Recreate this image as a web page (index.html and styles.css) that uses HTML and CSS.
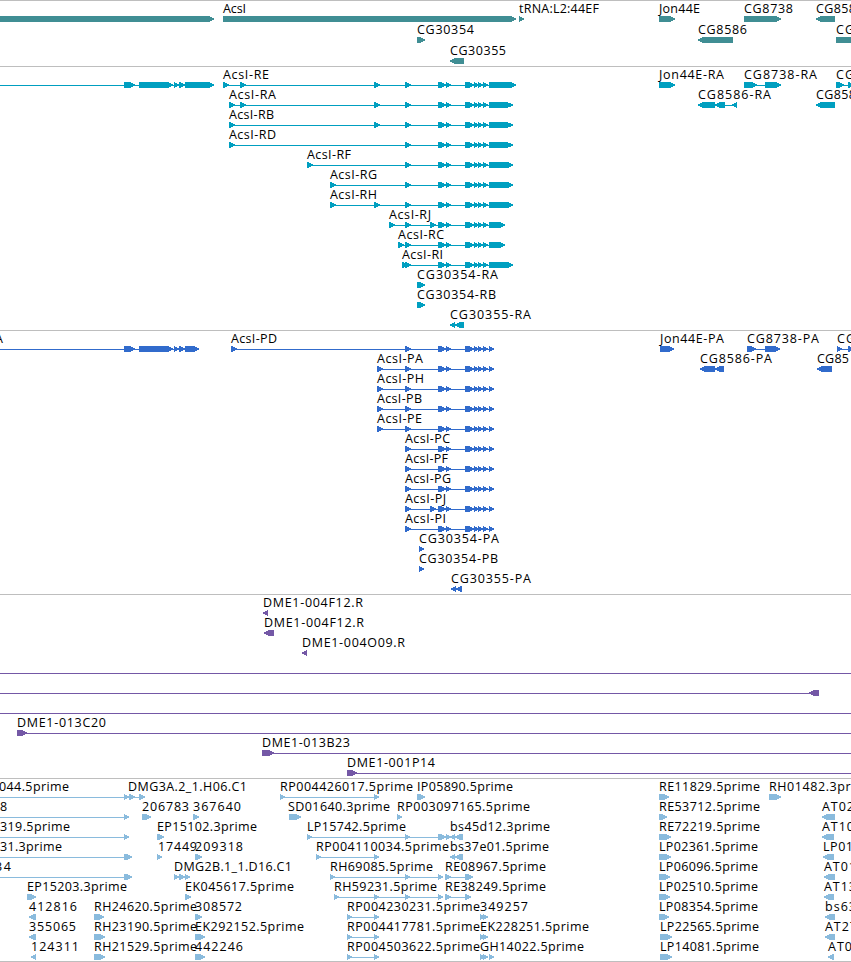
FILE: index.html
```html
<!DOCTYPE html>
<html lang="en">
<head>
    <meta charset="UTF-8">
    <meta name="viewport" content="width=device-width, initial-scale=1.0">
    <title>Genome tracks</title>
    <link rel="stylesheet" href="styles.css">
</head>
<body>
    <main id="browser"></main>
    <script src="tracks.js"></script>
</body>
</html>
```
FILE: styles.css
```css
:root {
    --gene: #408e94;
    --transcript: #009fc0;
    --protein: #316bcc;
    --clone: #7458a6;
    --est: #8abbdd;
}
body {
    margin: 0;
    background-color: white;
    overflow: hidden;
}
#browser {
    width: 100%;
    border-bottom: 1px solid #bebebe;
}
.track {
    box-sizing: border-box;
    border-top: 1px solid #bebebe;
    overflow: hidden;
}
.gene {
    height: 66px;
    fill: var(--gene);
}
.transcript {
    height: 264px;
    fill: var(--transcript);
}
.protein {
    height: 264px;
    fill: var(--protein);
}
.clone {
    height: 184px;
    fill: var(--clone);
}
.est {
    height: 183px;
    fill: var(--est);
}
.row {
    display: block;
    width: 100%;
    height: 20px;
    overflow: visible;
}
.gene .row {
    height: 21px;
}
.shape {
    shape-rendering: crispEdges;
}
.label {
    font-family: "Open Sans", "DejaVu Sans", sans-serif;
    font-size: 12.5px;
    fill: black;
}
```
FILE: tracks.js
```js
// label: [text, start, end]
// line:  [start, end]
// box:   [start, end], a third value of -1 points it left
const tail = [[438, 446], [446, 451], [465, 474], [474, 479], [478, 483], [483, 488]];

function transcript(name, labelEnd, starts, end) {
    const boxes = starts.map(x => [x, x + 5.5]).concat(tail, [[489, end]]);
    return { labels: [[name, starts[0], labelEnd]], lines: [[starts[0], end]], boxes: boxes };
}

function protein(name, labelEnd, starts) {
    return transcript(name, labelEnd, starts, 494);
}

function merge(...parts) {
    return {
        labels: parts.flatMap(p => p.labels || []),
        lines: parts.flatMap(p => p.lines || []),
        boxes: parts.flatMap(p => p.boxes || [])
    };
}

const tracks = [
    { type: 'gene', rows: [
        {
            labels: [['AcsI', 223, 246], ['tRNA:L2:44EF', 519, 599], ['Jon44E', 659, 700], ['CG8738', 744, 793], ['CG858', 816, 856]],
            boxes: [[-10, 214], [223, 516], [519, 524], [659, 675], [744, 781], [816, 835, -1]]
        },
        {
            labels: [['CG30354', 417, 474], ['CG8586', 698, 747], ['CG', 836, 854]],
            boxes: [[417, 425], [698, 733, -1], [836, 870]]
        },
        { labels: [['CG30355', 450, 506]], boxes: [[450, 464, -1]] }
    ] },
    { type: 'transcript', rows: [
        merge(transcript('AcsI-RE', 269, [223, 240, 374, 405], 516), {
            labels: [['Jon44E-RA', 659, 724], ['CG8738-RA', 744, 817], ['CG', 836, 854]],
            lines: [[0, 214], [744, 781], [836, 851]],
            boxes: [[124, 135], [139, 173], [174, 179], [179, 185], [185, 214], [659, 675], [744, 757], [765, 781], [836, 844], [848, 854]]
        }),
        merge(transcript('AcsI-RA', 276, [229, 240, 374, 405], 512.5), {
            labels: [['CG8586-RA', 698, 771], ['CG858', 816, 856]],
            lines: [[700, 737]],
            boxes: [[698, 715, -1], [715, 725, -1], [732, 737, -1], [816, 835, -1]]
        }),
        transcript('AcsI-RB', 274, [229, 374, 405], 512.5),
        transcript('AcsI-RD', 276, [229, 405], 512.5),
        transcript('AcsI-RF', 351, [307, 405], 513),
        transcript('AcsI-RG', 377, [330, 405], 513),
        transcript('AcsI-RH', 377, [330, 374, 405], 513),
        transcript('AcsI-RJ', 431, [389, 405, 430], 505),
        transcript('AcsI-RC', 444, [398, 405], 505),
        transcript('AcsI-RI', 443, [402, 405], 513),
        { labels: [['CG30354-RA', 417, 498]], boxes: [[417, 425]] },
        { labels: [['CG30354-RB', 417, 496]], boxes: [[417, 425]] },
        { labels: [['CG30355-RA', 450, 531]], boxes: [[450, 455, -1], [455, 464, -1]] }
    ] },
    { type: 'protein', rows: [
        merge(protein('AcsI-PD', 277, [231, 405]), {
            labels: [['A', -5, 3], ['Jon44E-PA', 660, 724], ['CG8738-PA', 747, 819], ['CG', 837, 855]],
            lines: [[0, 199], [747, 780], [837, 851]],
            boxes: [[124, 135], [139, 173], [174, 179], [179, 185], [185, 199], [660, 674], [747, 756], [765, 780], [837, 842], [848, 854]]
        }),
        merge(protein('AcsI-PA', 423, [377, 405]), {
            labels: [['CG8586-PA', 700, 772], ['CG85', 817, 849]],
            lines: [[702, 724]],
            boxes: [[700, 715, -1], [715, 724, -1], [817, 832, -1]]
        }),
        protein('AcsI-PH', 424, [377, 405]),
        protein('AcsI-PB', 422, [377, 405]),
        protein('AcsI-PE', 422, [377, 405]),
        protein('AcsI-PC', 450, [405]),
        protein('AcsI-PF', 448, [405]),
        protein('AcsI-PG', 451, [405]),
        protein('AcsI-PJ', 446, [405, 430]),
        protein('AcsI-PI', 446, [405]),
        { labels: [['CG30354-PA', 419, 499]], boxes: [[419, 424]] },
        { labels: [['CG30354-PB', 419, 498]], boxes: [[419, 424]] },
        { labels: [['CG30355-PA', 451, 531]], boxes: [[451, 456, -1], [456, 462, -1]] }
    ] },
    { type: 'clone', rows: [
        { labels: [['DME1-004F12.R', 263, 363]], boxes: [[263, 268, -1]] },
        { labels: [['DME1-004F12.R', 264, 364]], boxes: [[264, 274, -1]] },
        { labels: [['DME1-004O09.R', 302, 405]], boxes: [[302, 307, -1]] },
        { lines: [[0, 851]] },
        { lines: [[0, 819]], boxes: [[809, 819, -1]] },
        { lines: [[0, 851]] },
        { labels: [['DME1-013C20', 17, 106]], lines: [[17, 851]], boxes: [[17, 27]] },
        { labels: [['DME1-013B23', 262, 350]], lines: [[262, 851]], boxes: [[262, 274]] },
        { labels: [['DME1-001P14', 347, 435]], lines: [[347, 851]], boxes: [[347, 357]] }
    ] },
    { type: 'est', rows: [
        {
            labels: [['044.5prime', -1, 69], ['DMG3A.2_1.H06.C1', 128, 247], ['RP004426017.5prime', 280, 413], ['IP05890.5prime', 417, 513], ['RE11829.5prime', 659, 760], ['RH01482.3prime', 769, 874]],
            lines: [[0, 144], [280, 379]],
            boxes: [[124, 129], [129, 135], [139, 145], [280, 285], [374, 379], [417, 425], [659, 669], [769, 781]]
        },
        {
            labels: [['8', 0, 8], ['206783', 142, 189], ['367640', 193, 241], ['SD01640.3prime', 288, 390], ['RP003097165.5prime', 397, 530], ['RE53712.5prime', 659, 760], ['AT02', 822, 854]],
            lines: [[0, 129]],
            boxes: [[124, 129], [142, 151], [193, 199], [289, 301], [397, 402], [659, 667], [822, 835, -1]]
        },
        {
            labels: [['319.5prime', 0, 70], ['EP15102.3prime', 157, 257], ['LP15742.5prime', 307, 406], ['bs45d12.3prime', 450, 550], ['RE72219.5prime', 659, 760], ['AT10', 822, 854]],
            lines: [[0, 129], [307, 463]],
            boxes: [[124, 129], [157, 164], [307, 312], [405, 410], [438, 446], [446, 451], [450, 455, -1], [455, 463, -1], [659, 671], [822, 834, -1]]
        },
        {
            labels: [['31.3prime', 0, 62], ['17449', 158, 197], ['209318', 195, 243], ['RP004110034.5prime', 316, 449], ['bs37e01.5prime', 450, 549], ['LP02361.5prime', 659, 758], ['LP01', 823, 853]],
            lines: [[0, 132], [316, 379]],
            boxes: [[124, 132], [157, 162], [195, 202], [316, 321], [374, 379], [450, 455, -1], [455, 463, -1], [659, 671], [823, 834, -1]]
        },
        {
            labels: [['34', -5, 11], ['DMG2B.1_1.D16.C1', 174, 292], ['RH69085.5prime', 330, 433], ['RE08967.5prime', 445, 546], ['LP06096.5prime', 659, 758], ['AT01', 824, 856]],
            lines: [[0, 132], [330, 443], [445, 473]],
            boxes: [[124, 132], [174, 179], [179, 185], [185, 190], [330, 335], [405, 410], [438, 443], [445, 451], [465, 473], [659, 670], [824, 835, -1]]
        },
        {
            labels: [['EP15203.3prime', 27, 127], ['EK045617.5prime', 185, 294], ['RH59231.5prime', 334, 437], ['RE38249.5prime', 445, 546], ['LP02510.5prime', 659, 758], ['AT13', 824, 856]],
            lines: [[334, 443], [445, 471]],
            boxes: [[27, 36], [185, 191], [334, 339], [374, 379], [405, 410], [438, 443], [445, 451], [465, 471], [659, 670], [824, 834, -1]]
        },
        {
            labels: [['412816', 29, 77], ['RH24620.5prime', 94, 197], ['308572', 195, 242], ['RP004230231.5prime', 347, 480], ['349257', 480, 528], ['LP08354.5prime', 659, 758], ['bs63', 825, 856]],
            lines: [[347, 379]],
            boxes: [[29, 36, -1], [94, 104], [195, 202], [347, 352], [374, 379], [480, 485], [483, 488], [659, 669], [825, 835, -1]]
        },
        {
            labels: [['355065', 29, 76], ['RH23190.5prime', 94, 197], ['EK292152.5prime', 195, 304], ['RP004417781.5prime', 347, 480], ['EK228251.5prime', 480, 589], ['LP22565.5prime', 660, 759], ['AT27', 825, 857]],
            lines: [[347, 379]],
            boxes: [[29, 36, -1], [94, 105], [195, 205], [347, 352], [374, 379], [480, 485], [483, 488], [660, 672], [825, 835, -1]]
        },
        {
            labels: [['124311', 31, 79], ['RH21529.5prime', 94, 197], ['442246', 195, 243], ['RP004503622.5prime', 347, 480], ['GH14022.5prime', 480, 584], ['LP14081.5prime', 660, 759], ['AT0', 828, 852]],
            lines: [[347, 379]],
            boxes: [[31, 36, -1], [94, 105], [195, 205], [347, 352], [374, 379], [480, 485], [483, 488], [489, 494], [660, 672], [828, 834, -1]]
        }
    ] }
];

// Row geometry: the shapes sit at y 15-21, the intron line at y 18
function drawBox([start, end, dir]) {
    const head = Math.min(6, end - start);
    const side = dir === -1 ? -1 : 1;
    const back = dir === -1 ? end : start;
    const tip = dir === -1 ? start : end;
    const neck = tip - side * (head - 0.6);
    const cheek = tip - side * 2;
    return `<polygon class="shape" points="${back},15 ${neck},15 ${cheek},16.4 ${tip},17.4 ${tip},18.6 ${cheek},19.6 ${neck},21 ${back},21"/>`;
}

function drawLine([start, end]) {
    return `<rect class="shape" x="${start}" y="18" width="${end - start}" height="1"/>`;
}

function drawLabel([text, start, end]) {
    return `<text class="label" x="${start}" y="12" textLength="${end - start}">${text}</text>`;
}

function drawRow(row) {
    const parts = [
        ...(row.lines || []).map(drawLine),
        ...(row.boxes || []).map(drawBox),
        ...(row.labels || []).map(drawLabel)
    ];
    return `<svg class="row">${parts.join('')}</svg>`;
}

document.getElementById('browser').innerHTML = tracks.map(track =>
    `<section class="track ${track.type}">${track.rows.map(drawRow).join('')}</section>`
).join('');
```
